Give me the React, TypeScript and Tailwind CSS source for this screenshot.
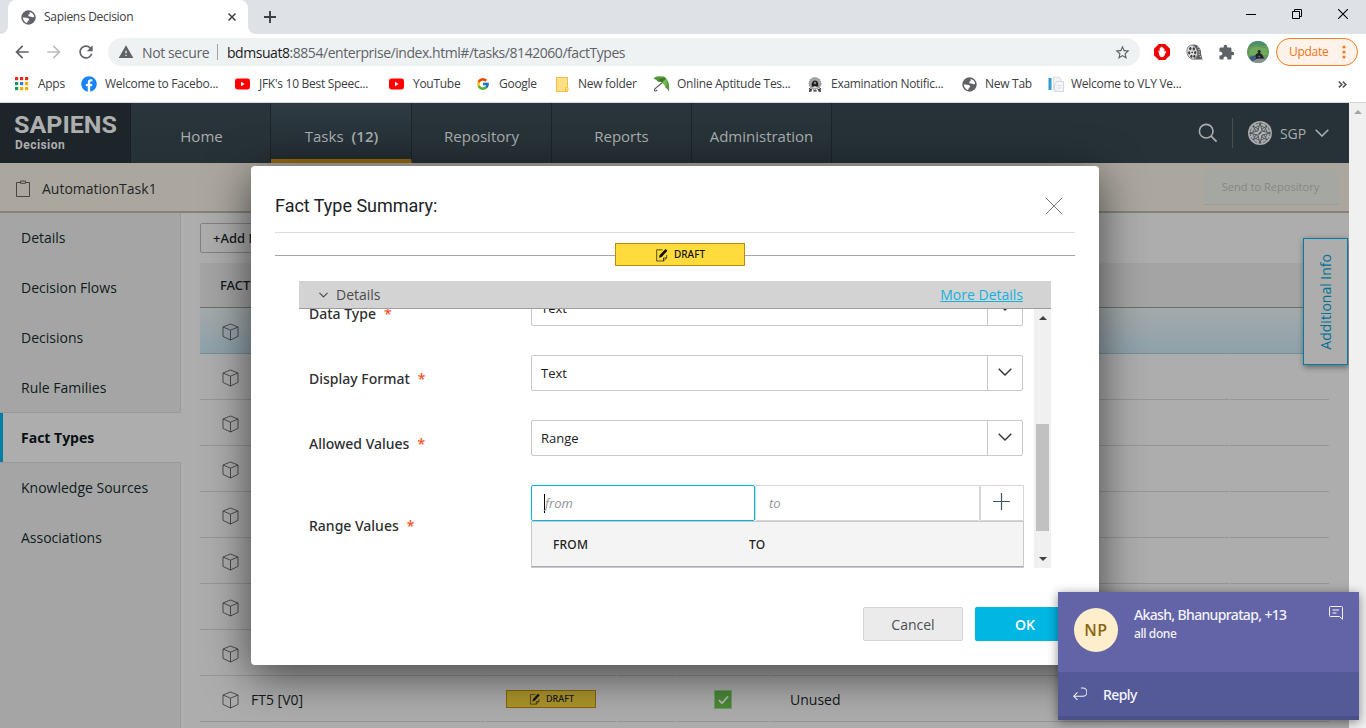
import React from "react";
import type { ReactNode } from "react";
import { MdArrowBack, MdArrowForward, MdExtension, MdRefresh, MdStarBorder, MdWarning } from "react-icons/md";
import { FcGoogle } from "react-icons/fc";
import { FaFacebook } from "react-icons/fa";

/* ---------- small drawings ---------- */

function Chevron({ w = 14, h = 8, className = "", stroke = 1.3 }: { w?: number; h?: number; className?: string; stroke?: number }) {
  return (
    <svg width={w} height={h} viewBox="0 0 14 8" fill="none" stroke="currentColor" strokeWidth={stroke} className={className}>
      <path d="M0.7 0.7 L7 7 L13.3 0.7" />
    </svg>
  );
}

function Globe() {
  return (
    <svg width="15" height="15" viewBox="0 0 15 15" className="ml-[1px]">
      <circle cx="7.5" cy="7.5" r="7.2" fill="#5f6368" />
      <path d="M8.6 1.9 Q12.6 2.8 13.2 6.6 Q12.2 7.6 10.8 6.9 Q9.8 6.2 8.6 6.5 Q7.2 6.6 7.3 5.3 Q7.4 4.4 8.3 4.2 Q9 3.4 8.6 1.9 Z" fill="#fff" />
      <path d="M1.8 7.6 Q4.4 7.1 6.6 8.1 Q8.3 8.5 8.2 9.9 Q7 10.6 6.6 11.6 Q6.6 12.8 5.6 13 Q2.2 11.6 1.8 7.6 Z" fill="#fff" />
    </svg>
  );
}

function Cube() {
  return (
    <svg width="17" height="18" viewBox="0 0 17 18" fill="none" stroke="#3f4346" strokeWidth="0.9" strokeLinejoin="round">
      <path d="M8.5 1 L16 4 V13.4 L8.5 17 L1 13.4 V4 Z M1 4 L8.5 7.2 L16 4 M8.5 7.2 V17" />
    </svg>
  );
}

function DraftIcon({ size = 13 }: { size?: number }) {
  return (
    <svg width={size} height={size} viewBox="0 0 13 14" fill="none" stroke="currentColor">
      <path d="M7 1.8 H1.2 V13 H8 L11.2 10 V7" strokeWidth="0.7" />
      <path d="M8 13 V10 H11" strokeWidth="0.8" />
      <path d="M3.4 9.8 L4.2 7 L10 0.9 L12 2.7 L6.2 8.9 Z" fill="currentColor" stroke="none" />
    </svg>
  );
}

function AppsGrid() {
  const colors = ["#ea2a1c", "#ea2a1c", "#ea2a1c", "#0f9d58", "#2b7de9", "#f9ab00", "#0f9d58", "#f9ab00", "#f9ab00"];
  return (
    <svg width="14" height="14" viewBox="0 0 14 14">
      {colors.map((c, i) => (
        <rect key={i} x={(i % 3) * 5} y={Math.floor(i / 3) * 5} width="3.2" height="3.2" fill={c} />
      ))}
    </svg>
  );
}

function YouTubeIcon() {
  return (
    <svg width="15" height="12" viewBox="0 0 15 12">
      <rect y="0.5" width="15" height="11" rx="2.4" fill="#f00" />
      <path d="M6 3.8 L9.6 6 L6 8.2 Z" fill="#fff" />
    </svg>
  );
}

function FolderIcon() {
  return (
    <svg width="13" height="15" viewBox="0 0 13 15">
      <rect x="0.5" y="0.5" width="11" height="14" fill="#fddf85" stroke="#f0c04a" />
      <path d="M9.5 10.5 h2.5 v3.5 h-2.5 z" fill="#fddf85" stroke="#f0c04a" />
    </svg>
  );
}

function UmbrellaIcon() {
  return (
    <svg width="17" height="16" viewBox="0 0 17 16">
      <path d="M10 6 L2.4 12.4 Q0.4 14.5 2.2 15 Q3.4 15.2 4.2 13.8" fill="none" stroke="#555" strokeWidth="1.1" />
      <path d="M0.5 2.6 Q3 -0.4 8 0.6 Q11 -0.4 13.2 2.6 Q17 7 16 15.4 Q14.4 12.4 12.8 12 Q12.2 9 9.2 6.6 Q7.2 5.2 4.8 5.6 Q3.4 3.4 0.5 2.6 Z" fill="#55953b" />
      <path d="M13.2 2.6 Q7 1 4.8 5.6 Q7.6 5 9.2 6.6 Z" fill="#3a7a2b" />
      <path d="M13.2 2.6 Q15 8 12.8 12 Q12 9 9.2 6.6 Z" fill="#78b556" />
    </svg>
  );
}

function EmblemIcon() {
  return (
    <svg width="14" height="15" viewBox="0 0 14 15">
      <circle cx="7" cy="6.6" r="6" fill="#a5a5a5" />
      <circle cx="7" cy="6.6" r="6" fill="none" stroke="#777" strokeWidth="1" strokeDasharray="1 1" />
      <path d="M3.8 9.6 Q3 4 7 3.6 Q11 4 10.2 9.6 Z" fill="#1c1c1c" />
      <circle cx="7" cy="6" r="1.3" fill="#888" />
      <path d="M4.6 11 Q7 7.6 9.4 11 Z" fill="#ddd" />
      <path d="M1 11.6 l3 1.4 M13 11.6 l-3 1.4 M1 14 h2.4 M5.4 13.8 h3.2 M10.6 14 h2.4" stroke="#222" strokeWidth="1.3" />
    </svg>
  );
}

function BookIcon() {
  return (
    <svg width="16" height="16" viewBox="0 0 16 16">
      <rect x="0.5" y="2" width="3" height="12" fill="#2f9bd0" />
      <path d="M5.5 1 H11 L13 3 V14 H5.5 Z" fill="#f1f2f5" stroke="#d3d7dd" strokeWidth="0.8" />
      <path d="M8.5 5.5 H15.5 V15.4 H6.5 V10 Z" fill="#f6f7f9" stroke="#c9cdd5" strokeWidth="0.8" />
      <path d="M8.5 9.5 h5 M8.5 12 h5" stroke="#d0d4db" strokeWidth="0.9" />
    </svg>
  );
}

function HandBlock() {
  return (
    <svg width="16" height="16" viewBox="0 0 16 16">
      <path d="M4.8 0 H11.2 L16 4.8 V11.2 L11.2 16 H4.8 L0 11.2 V4.8 Z" fill="#f10000" />
      <path d="M4.4 7 Q4.4 6 5.1 6.2 L5.7 8 V3.9 Q6.2 3.1 6.8 3.9 V3 Q7.4 2.2 8 3 V3.6 Q8.7 2.9 9.3 3.7 V4.8 Q10 4.2 10.5 5 V8 L11.4 7 Q12.5 6.6 12.3 7.6 L10.4 11.6 Q9.6 13.4 7.8 13.3 Q5.7 13 5.1 10.8 Z" fill="#fff" />
    </svg>
  );
}

function FilmReel() {
  return (
    <svg width="17" height="17" viewBox="0 0 17 17">
      <path d="M5 1 Q10 -0.4 13 3 Q15.4 6 15 10 L16.6 15.6 L8 15.5 Z" fill="#5c5c5c" />
      <path d="M11.6 2.6 Q14 6 13 10 L15.4 14.6" stroke="#c8c8c8" strokeWidth="1.3" fill="none" strokeDasharray="1.3 1.2" />
      <ellipse cx="6.2" cy="8.2" rx="5.2" ry="7.2" fill="#dcdcdc" stroke="#777" strokeWidth="0.8" transform="rotate(-14 6.2 8.2)" />
      <g fill="#3d3d3d">
        <ellipse cx="4.3" cy="4.6" rx="1.2" ry="1.6" />
        <ellipse cx="7.8" cy="4.8" rx="1.2" ry="1.6" />
        <ellipse cx="3.2" cy="8.8" rx="1.1" ry="1.6" />
        <ellipse cx="9.2" cy="8.6" rx="1.1" ry="1.6" />
        <ellipse cx="5.4" cy="12.2" rx="1.1" ry="1.5" />
        <ellipse cx="8.4" cy="12.2" rx="1.1" ry="1.5" />
        <circle cx="6.2" cy="8.4" r="0.8" />
      </g>
    </svg>
  );
}

function Avatar() {
  return (
    <svg width="22" height="22" viewBox="0 0 22 22">
      <defs>
        <clipPath id="avatarClip">
          <circle cx="11" cy="11" r="11" />
        </clipPath>
      </defs>
      <g clipPath="url(#avatarClip)">
        <rect width="22" height="22" fill="#639a5c" />
        <path d="M0 0 H22 V4 Q14 6 9 3 Q4 6 0 6 Z" fill="#4a8f72" />
        <path d="M3 8 Q10 4 20 8 L21 14 H2 Z" fill="#6fab5c" />
        <rect y="16.5" width="22" height="6" fill="#87928f" />
        <path d="M8 15.5 Q8.6 12 12 12 Q15 12 16.4 16 L18 17.6 L9 17.8 Z" fill="#20242c" />
        <circle cx="12.2" cy="10.6" r="1.6" fill="#2c2320" />
        <path d="M2 16 L8 14.6 L9.4 18.4 L5 20.4 Z" fill="#3f5c86" />
        <circle cx="12.2" cy="15.6" r="0.9" fill="#9c6a55" />
      </g>
    </svg>
  );
}

function Compass() {
  return (
    <svg width="24" height="24" viewBox="0 0 24 24" fill="none" stroke="#3b454a">
      <circle cx="12" cy="12" r="12" fill="#a9abac" stroke="none" />
      <circle cx="12" cy="12" r="9.8" strokeWidth="0.7" strokeDasharray="3 1.6" />
      <circle cx="12" cy="12" r="7" strokeWidth="0.7" />
      <path d="M5 5 L9.6 7.6 L12 12 L7.6 9.6 Z M19 5 L14.4 7.6 L12 12 L16.4 9.6 Z M5 19 L9.6 16.4 L12 12 L7.6 14.4 Z M19 19 L14.4 16.4 L12 12 L16.4 14.4 Z" fill="#a9abac" strokeWidth="0.8" />
      <path d="M12 1.5 L14 10 L22.5 12 L14 14 L12 22.5 L10 14 L1.5 12 L10 10 Z" fill="#b3b5b6" strokeWidth="0.8" />
      <path d="M10.5 13.5 L13.5 10.5" strokeWidth="1.5" />
    </svg>
  );
}

/* ---------- browser chrome ---------- */

function TabStrip() {
  return (
    <div className="flex h-[34px] shrink-0 bg-[#dee1e6]">
      <div className="flex w-2 items-end bg-white">
        <div className="h-full w-full rounded-br-lg bg-[#dee1e6]" />
      </div>
      <div className="flex w-[240px] items-center rounded-t-lg bg-white pl-3">
        <Globe />
        <span className="ml-2 w-[184px] whitespace-nowrap text-[12px] tracking-[-0.3px] text-[#3c4043]">Sapiens Decision</span>
        <svg width="8" height="8" viewBox="0 0 8 8" stroke="#3c4043" strokeWidth="1.5">
          <path d="M0.5 0.5 L7.5 7.5 M7.5 0.5 L0.5 7.5" />
        </svg>
      </div>
      <div className="w-2 bg-white">
        <div className="h-full w-full rounded-bl-lg bg-[#dee1e6]" />
      </div>
      <div className="flex flex-1 items-center pl-2">
        <svg width="12" height="12" viewBox="0 0 12 12" stroke="#3c4043" strokeWidth="1.9">
          <path d="M6 0 V12 M0 6 H12" />
        </svg>
      </div>
      <div className="flex w-[120px] items-start pt-[9px] text-black">
        <svg width="10" height="10" viewBox="0 0 10 10" stroke="currentColor">
          <path d="M0 5.5 H10" />
        </svg>
        <svg width="10" height="10" viewBox="0 0 10 10" fill="none" stroke="currentColor" className="ml-9">
          <path d="M0.5 2.5 H7.5 V9.5 H0.5 Z M2.5 2.5 V0.5 H9.5 V7.5 H7.5" />
        </svg>
        <svg width="10" height="10" viewBox="0 0 10 10" stroke="currentColor" className="ml-9">
          <path d="M0 0 L10 10 M10 0 L0 10" strokeWidth="1.1" />
        </svg>
      </div>
    </div>
  );
}

function AddressBar() {
  return (
    <div className="flex h-9 shrink-0 items-center bg-white pl-[12px] text-[#5f6368]">
      <MdArrowBack size={20} />
      <MdArrowForward size={20} className="ml-[12px] text-[#bbbdc0]" />
      <MdRefresh size={20} className="ml-[12px]" />
      <div className="ml-[12px] flex h-7 w-[1032px] items-center rounded-full bg-[#eff2f3] pl-[10px]">
        <MdWarning size={16} />
        <span className="ml-2 w-[67px] whitespace-nowrap text-[14px] tracking-[-0.38px]">Not secure</span>
        <div className="ml-2 h-4 w-px bg-[#9aa0a6]" />
        <span className="ml-[9px] flex-1 whitespace-nowrap text-[14px] tracking-[-0.45px]">
          <span className="text-[#202124]">bdmsuat8</span>:8854/enterprise/index.html#/tasks/8142060/factTypes
        </span>
        <MdStarBorder size={17} className="mr-[9px]" />
      </div>
      <div className="flex items-center pl-[14px]">
        <HandBlock />
        <div className="ml-4">
          <FilmReel />
        </div>
        <MdExtension size={17} className="ml-[15px]" />
        <div className="ml-[12px]">
          <Avatar />
        </div>
      </div>
      <div className="ml-[7px] flex h-7 w-[82px] items-center rounded-full border border-[#fa7b17] bg-[#fef3ea] pl-[12px] text-[#ee7414]">
        <span className="w-[53px] whitespace-nowrap text-[12px] tracking-[-0.3px]">Update</span>
        <svg width="4" height="14" viewBox="0 0 4 14" fill="#fa7b17">
          <circle cx="2" cy="2" r="1.6" />
          <circle cx="2" cy="7" r="1.6" />
          <circle cx="2" cy="12" r="1.6" />
        </svg>
      </div>
    </div>
  );
}

const bookmarks: { icon: ReactNode; label: string; iconBox: string; box: string }[] = [
  { icon: <AppsGrid />, label: "Apps", iconBox: "w-[23px]", box: "w-[66px]" },
  { icon: <FaFacebook size={16} className="text-[#1685f8]" />, label: "Welcome to Facebo...", iconBox: "w-6", box: "w-[154px]" },
  { icon: <YouTubeIcon />, label: "JFK's 10 Best Speec...", iconBox: "w-6", box: "w-[154px]" },
  { icon: <YouTubeIcon />, label: "YouTube", iconBox: "w-6", box: "w-[87px]" },
  { icon: <FcGoogle size={14} />, label: "Google", iconBox: "w-[23px]", box: "w-20" },
  { icon: <FolderIcon />, label: "New folder", iconBox: "w-[22px]", box: "w-[97px]" },
  { icon: <UmbrellaIcon />, label: "Online Aptitude Tes...", iconBox: "w-6", box: "w-[155px]" },
  { icon: <EmblemIcon />, label: "Examination Notific...", iconBox: "w-[23px]", box: "w-[153px]" },
  { icon: <Globe />, label: "New Tab", iconBox: "w-6", box: "w-[87px]" },
  { icon: <BookIcon />, label: "Welcome to VLY Ve...", iconBox: "w-[23px]", box: "w-[290px]" },
];

function BookmarkBar() {
  return (
    <div className="flex h-[33px] shrink-0 items-center border-b border-[#d6d9dc] bg-white pb-1 pl-[15px]">
      {bookmarks.map((b, i) => (
        <div key={i} className={`flex shrink-0 items-center ${b.box}`}>
          <span className={`shrink-0 ${b.iconBox}`}>{b.icon}</span>
          <span className="whitespace-nowrap text-[12px] tracking-[-0.28px] text-[#3c4043]">{b.label}</span>
        </div>
      ))}
      <svg width="9" height="7" viewBox="0 0 9 7" fill="none" stroke="#4d5156" strokeWidth="1.5">
        <path d="M0.8 0.6 L3.8 3.5 L0.8 6.4 M4.8 0.6 L7.8 3.5 L4.8 6.4" />
      </svg>
    </div>
  );
}

/* ---------- application ---------- */

const navItems = ["Home", "Tasks", "Repository", "Reports", "Administration"];

function AppHeader() {
  return (
    <div className="flex h-[60px] shrink-0 bg-[#263238] text-[#a9adaf]">
      <div className="w-[131px] border-r border-[#172024] bg-[#1d252b] pl-[14px] pt-3 text-[#aeaeae]">
        <div className="w-[95px] origin-left scale-x-[1.09] whitespace-nowrap font-['Roboto'] text-[23px] font-bold leading-[22px]">SAPIENS</div>
        <div className="ml-px mt-px font-['Roboto'] text-[12px] font-bold leading-[14px] tracking-[0.45px]">Decision</div>
      </div>
      {navItems.map((n) =>
        n === "Tasks" ? (
          <div key={n} className="flex w-[141px] items-center justify-center border-b-4 border-r border-b-[#956a13] border-r-[#1b2529] bg-linear-to-b from-[#2e3b43] to-[#232d33] pl-px pt-[11px] text-[15px]">
            {n}
            <b className="ml-2 font-semibold">(12)</b>
          </div>
        ) : (
          <div key={n} className={`flex w-[140px] items-center justify-center border-r border-[#1b2529] bg-linear-to-b from-[#2a353b] to-[#263136] pt-[6px] text-[15px] ${n === "Home" ? "pl-0.5" : ""}`}>
            {n}
          </div>
        ),
      )}
      <div className="flex flex-1 items-center justify-end pr-5">
        <svg width="20" height="20" viewBox="0 0 20 20" fill="none" stroke="currentColor" strokeWidth="1.6">
          <circle cx="8.2" cy="8.2" r="6.8" />
          <path d="M13.1 13.1 L18.6 18.6" />
        </svg>
        <div className="ml-[14px] h-[30px] w-px bg-[#4a4d4e]" />
        <div className="ml-[15px]">
          <Compass />
        </div>
        <span className="ml-2 w-[35px] whitespace-nowrap pt-px text-[14px] tracking-[-0.1px]">SGP</span>
        <Chevron stroke={1.6} />
      </div>
    </div>
  );
}

function TaskBar() {
  return (
    <div className="flex h-[50px] shrink-0 items-center border-b-2 border-[#85827d] bg-[#aba79f] pl-4 pr-[10px]">
      <svg width="14" height="18" viewBox="0 0 14 18" fill="none" stroke="#4b4440" strokeWidth="1" className="mt-[3px]">
        <path d="M4.5 2.5 H0.5 V16.5 H13.5 V2.5 H9.5 M4.5 1 H9.5 V3.3 H4.5 Z" />
      </svg>
      <span className="ml-3 mt-[2px] flex-1 text-[14px] text-[#1f2628]">AutomationTask1</span>
      <div className="flex h-[35px] w-[136px] items-center justify-center rounded-xs border-b border-[#9a9b96] bg-[#a5a7a2] pr-px pt-[2px] text-[11px] tracking-[0.04px] text-[#868885]">Send to Repository</div>
    </div>
  );
}

const sideItems = ["Details", "Decision Flows", "Decisions", "Rule Families", "Fact Types", "Knowledge Sources", "Associations"];

function SideNav() {
  return (
    <div className="w-[181px] shrink-0 text-[14px] text-[#0f1c20]">
      {sideItems.map((s) =>
        s === "Fact Types" ? (
          <div key={s} className="flex h-[50px] items-center border-l-3 border-[#007ea3] pb-px pl-[18px] font-bold text-[#061014]">
            {s}
          </div>
        ) : (
          <div
            key={s}
            className={`flex h-[50px] items-center border-r border-[#999] bg-[#a5a5a5] pl-[21px] ${s === "Rule Families" ? "rounded-br-xs border-b" : "pb-px"} ${s === "Knowledge Sources" ? "-mt-px h-[51px] rounded-tr-xs border-t" : ""}`}
          >
            {s}
          </div>
        ),
      )}
      <div className="h-[165px] border-r border-[#999] bg-[#a5a5a5]" />
    </div>
  );
}

const columns = ["w-[285px]", "w-[130px]", "w-[59px]", "w-[92px]", "w-[459px]", "w-[99px]"];

function TableRow({ selected, children }: { selected?: boolean; children?: ReactNode[] }) {
  return (
    <div className={`flex h-[46px] gap-px ${selected ? "bg-linear-to-b from-[#a4aaab] to-[#8ea1aa]" : ""}`}>
      {columns.map((c, i) => (
        <div key={i} className={`flex items-center border-b ${selected ? "border-[#788e98]" : "border-[#969696]"} ${c}`}>
          {i === 0 && (
            <span className="ml-[22px] mt-[3px]">
              <Cube />
            </span>
          )}
          {children?.[i]}
        </div>
      ))}
    </div>
  );
}

function TableArea() {
  const rows = [1, 2, 3, 4, 5, 6, 7];
  return (
    <div className="relative min-w-0 flex-1 bg-[#adadad] pl-[19px] pr-[20px] pt-[10px] text-[#14191b]">
      <div className="flex h-[30px] w-[120px] items-center rounded-xs border border-[#828282] pl-3 pt-px font-['Noto_Sans'] text-[13px] font-medium">+Add New</div>
      <div className="mt-[10px] flex h-[45px] items-center border-b border-[#6b6f72] bg-[#a4a4a4] pl-5 pt-px font-['Noto_Sans'] text-[13px] font-medium">FACT TYPE</div>
      <TableRow selected />
      {rows.map((r) => (
        <TableRow key={r} />
      ))}
      <TableRow>
        {[
          <span key="n" className="ml-[12px] mt-[2px] whitespace-nowrap text-[14px]">FT5 [V0]</span>,
          <div key="d" className="ml-5 mt-px flex h-[18px] w-[90px] items-center justify-center gap-[5px] border border-[#8a6307] bg-[#ad952a] pl-px font-['Noto_Sans'] text-[9px] font-medium">
            <DraftIcon size={12} />
            DRAFT
          </div>,
          null,
          <div key="c" className="ml-[37px] mt-[2px] flex h-[19px] w-[18px] items-center justify-center border border-[#6b9e66] bg-[#4a8837]">
            <svg width="11" height="10" viewBox="0 0 12 10" fill="none" stroke="#b9bdb9" strokeWidth="1.8">
              <path d="M1 5.2 L4.4 8.6 L11 1" />
            </svg>
          </div>,
          <span key="u" className="ml-5 mt-[2px] text-[14px]">Unused</span>,
          null,
        ]}
      </TableRow>
      <div className="absolute right-px top-[25px] flex h-[127px] w-[45px] items-center justify-center border border-[#007ea3] bg-[#adadad] shadow-[1px_2px_6px_rgba(0,0,0,0.45)]">
        <span className="rotate-180 whitespace-nowrap text-[14px] text-[#007393] [writing-mode:vertical-rl]">Additional Info</span>
      </div>
    </div>
  );
}

/* ---------- dialog ---------- */

function FieldLabel({ children }: { children: ReactNode }) {
  return (
    <div className="w-[222px] whitespace-nowrap pt-[11px] font-['Noto_Sans'] text-[14px] font-medium text-[#2d2f31]">
      {children}
      <span className="ml-2 text-[#f4511e]">*</span>
    </div>
  );
}

function SelectField({ label, value }: { label: string; value: string }) {
  return (
    <div className="mb-[29px] flex h-9 items-center">
      <FieldLabel>{label}</FieldLabel>
      <div className="flex h-9 w-[492px] rounded-xs border border-[#c8c8c8]">
        <div className="flex flex-1 items-center pl-[9px] pt-[2px] text-[13px] text-[#1b1b1b]">{value}</div>
        <div className="flex w-[35px] items-center justify-center border-l border-[#c8c8c8] text-[#333]">
          <Chevron stroke={1.4} className="-mt-[2px]" />
        </div>
      </div>
    </div>
  );
}

function FactTypeDialog() {
  return (
    <div className="absolute left-[251px] top-[63px] h-[499px] w-[848px] rounded bg-white px-6 shadow-[0_10px_45px_rgba(0,0,0,0.62)]">
      <div className="flex h-[67px] items-center justify-between border-b border-[#dcdcdc] pt-[13px]">
        <h1 className="font-['Roboto'] text-[18px] leading-6 tracking-[-0.02px] text-[#1c2227]">Fact Type Summary:</h1>
        <svg width="18" height="18" viewBox="0 0 18 18" stroke="#757a80" strokeWidth="1" className="mr-[12px]">
          <path d="M0.8 0.8 L17.2 17.2 M17.2 0.8 L0.8 17.2" />
        </svg>
      </div>
      <div className="mt-[10px] flex items-center">
        <div className="mt-px h-px w-[340px] bg-[#a4a4a4]" />
        <div className="flex h-[23px] w-[130px] items-center justify-center gap-[5px] border border-[#bb8a10] bg-[#ffdc3c] font-['Noto_Sans'] text-[10px] font-medium text-[#111]">
          <DraftIcon size={14} />
          DRAFT
        </div>
        <div className="mt-px h-px flex-1 bg-[#a4a4a4]" />
      </div>
      <div className="mx-6 mt-[15px] flex h-7 items-center justify-between border-b border-[#9c9c9c] bg-[#d3d3d3] pl-5 pr-7 text-[14px]">
        <div className="flex items-center text-[#4c4c4c]">
          <Chevron w={9} h={6} stroke={1.7} />
          <span className="ml-2">Details</span>
        </div>
        <a className="text-[#15b1de] underline">More Details</a>
      </div>
      <div className="mx-6 flex h-[259px] overflow-hidden">
        <div className="-mt-[19px] w-[735px] pl-[10px]">
          <SelectField label="Data Type" value="Text" />
          <SelectField label="Display Format" value="Text" />
          <SelectField label="Allowed Values" value="Range" />
          <div className="flex">
            <div className="flex h-[70px] items-center">
              <FieldLabel>Range Values</FieldLabel>
            </div>
            <div className="w-[493px]">
              <div className="flex h-9 text-[13px] italic text-[#8f9396]">
                <div className="flex w-[224px] items-center rounded-xs border border-[#00b6e3] pl-[12px]">
                  <span className="h-[19px] w-px bg-black" />
                  <span className="pt-[2px]">from</span>
                </div>
                <div className="flex w-[225px] items-center rounded-xs border border-[#d6d6d6] pl-[13px] pt-[2px]">to</div>
                <div className="flex w-[44px] items-center justify-center border border-[#d6d6d6]">
                  <svg width="17" height="17" viewBox="0 0 17 17" stroke="#3f5560" strokeWidth="1.2" className="-mt-[3px] mr-px">
                    <path d="M8.5 0 V17 M0 8.5 H17" />
                  </svg>
                </div>
              </div>
              <div className="flex h-[47px] flex-col border border-[#c9c9cb]">
                <div className="flex flex-1 items-center border-b border-[#a9aab2] bg-[#f4f4f4] pl-[21px] pt-[2px] font-['Noto_Sans'] text-[12px] font-medium tracking-[0.2px] text-[#222]">
                  <span className="w-[196px]">FROM</span>
                  <span>TO</span>
                </div>
              </div>
            </div>
          </div>
        </div>
        <div className="flex w-[17px] flex-col items-center bg-[#f0f0f0] pt-[7px]">
          <svg width="8" height="4" viewBox="0 0 8 4" fill="#404040">
            <path d="M0 4 L4 0 L8 4 Z" />
          </svg>
          <div className="mt-[104px] h-[107px] w-[13px] bg-[#c1c1c1]" />
          <svg width="8" height="4" viewBox="0 0 8 4" fill="#404040" className="mt-[26px]">
            <path d="M0 0 L4 4 L8 0 Z" />
          </svg>
        </div>
      </div>
      <div className="mt-[39px] flex justify-end gap-3 text-[14px]">
        <div className="flex h-[34px] w-[100px] items-center justify-center rounded-xs border border-[#d4d4d4] bg-[#ebebeb] text-[#4a5157]">Cancel</div>
        <div className="flex h-[34px] w-[100px] items-center justify-center rounded-xs bg-[#00b6e3] font-semibold text-white">OK</div>
      </div>
    </div>
  );
}

function MessageToast() {
  return (
    <div className="absolute left-[1058px] top-[592px] flex h-32 w-[301px] flex-col bg-[#6264a7] text-[#f3f3fb] shadow-[0_2px_10px_rgba(0,0,0,0.45)]">
      <div className="flex h-20 pl-4 pt-4">
        <div className="flex size-11 items-center justify-center rounded-full bg-[#ffeecb] text-[16px] font-semibold tracking-[0.6px] text-[#8b6414]">NP</div>
        <div className="ml-4 w-[195px] whitespace-nowrap font-['Noto_Sans'] font-medium">
          <div className="-mt-[3px] text-[14px] leading-5 tracking-[-0.65px]">Akash, Bhanupratap, +13</div>
          <div className="text-[12px] leading-[18px] tracking-[-0.4px]">all done</div>
        </div>
        <svg width="14" height="14" viewBox="0 0 14 14" fill="none" stroke="currentColor" strokeWidth="1" className="-mt-[2px]">
          <path d="M1.5 0.5 H12.5 Q13.5 0.5 13.5 1.5 V13.2 L10.5 10.5 H1.5 Q0.5 10.5 0.5 9.5 V1.5 Q0.5 0.5 1.5 0.5 Z M3.5 4 H10 M3.5 7 H7.5" />
        </svg>
      </div>
      <div className="flex flex-1 items-center border-b-4 border-[#4b5089] bg-[#545a97] pl-[15px]">
        <svg width="14" height="14" viewBox="0 0 15 14" fill="none" stroke="currentColor" strokeWidth="1.1">
          <path d="M8.5 0.6 H10.5 A4.4 4.4 0 0 1 10.5 9.4 H0.8 M4.8 5.2 L0.8 9.4 L4.8 13.4" />
        </svg>
        <span className="ml-4 pt-px font-['Noto_Sans'] text-[14px] font-medium tracking-[-0.6px]">Reply</span>
      </div>
    </div>
  );
}

export default function App() {
  return (
    <div className="relative flex h-[728px] w-[1366px] flex-col overflow-hidden bg-white font-['Open_Sans','Noto_Sans',sans-serif]">
      <TabStrip />
      <AddressBar />
      <BookmarkBar />
      <div className="flex h-[625px] shrink-0">
        <div className="relative flex w-[1349px] flex-col overflow-hidden bg-[#adadad]">
          <AppHeader />
          <TaskBar />
          <div className="flex flex-1">
            <SideNav />
            <TableArea />
          </div>
          <FactTypeDialog />
        </div>
        <div className="flex w-[17px] justify-center bg-[#f0f0f0] pt-[7px]">
          <svg width="8" height="4" viewBox="0 0 8 4" fill="#a3a3a3">
            <path d="M0 4 L4 0 L8 4 Z" />
          </svg>
        </div>
      </div>
      <MessageToast />
    </div>
  );
}
